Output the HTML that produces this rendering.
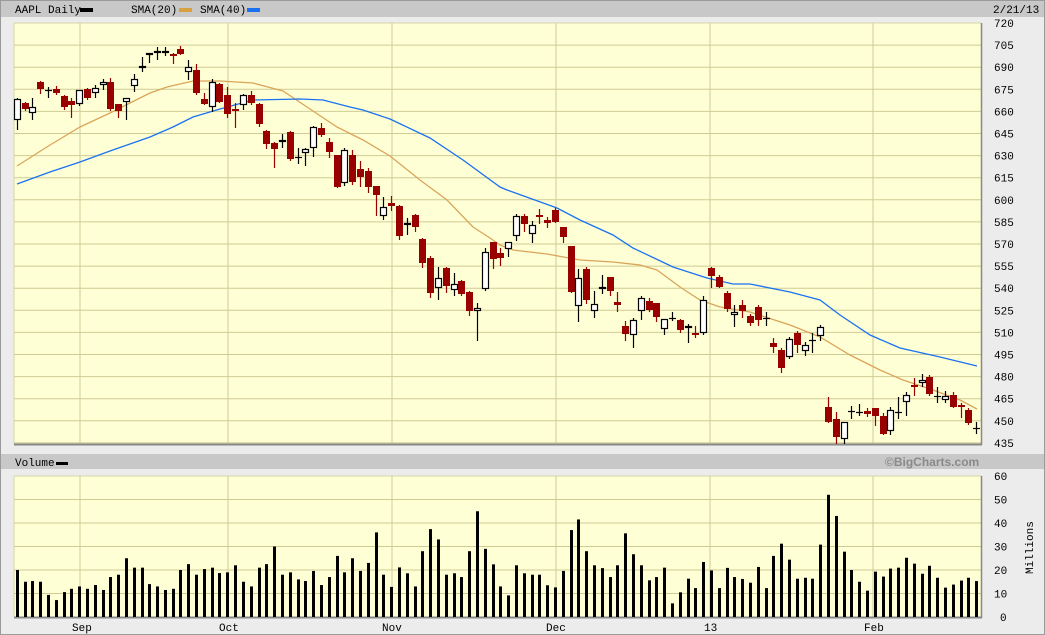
<!DOCTYPE html>
<html><head><meta charset="utf-8"><style>
html,body{margin:0;padding:0;background:#ececec;}
body{width:1045px;height:635px;overflow:hidden;position:relative;font-family:"Liberation Mono","DejaVu Sans Mono",monospace;}
svg{position:absolute;left:0;top:0;}
</style></head><body>
<svg id="s" width="1045" height="635" xmlns="http://www.w3.org/2000/svg" font-family="Liberation Mono, DejaVu Sans Mono, monospace" font-size="11"></svg>
<script>
var s=document.getElementById('s');var h='';
function r(x,y,w,hh,f){h+='<rect x="'+x+'" y="'+y+'" width="'+w+'" height="'+hh+'" fill="'+f+'"/>';}
function l(x1,y1,x2,y2,c,w){h+='<line x1="'+x1+'" y1="'+y1+'" x2="'+x2+'" y2="'+y2+'" stroke="'+c+'" stroke-width="'+(w||1)+'"/>';}
function t(x,y,str,extra){h+='<text x="'+x+'" y="'+y+'" '+(extra||'')+'>'+str+'</text>';}
// frame
r(0,0,1045,635,'#ececec');
l(0.5,0,0.5,635,'#9a9a9a');l(0,0.5,1045,0.5,'#9a9a9a');l(1044.5,0,1044.5,635,'#9a9a9a');l(0,634.5,1045,634.5,'#9a9a9a');
r(1,1,1043,16,'#c8c8c8');
r(1,454,1043,15,'#c8c8c8');
// header text
t(15,13,'AAPL Daily');r(80,8,13,4,'#000');
t(131,13,'SMA(20)');r(179,8,13,4,'#d9a040');
t(200,13,'SMA(40)');r(247,8,13,4,'#1a72f0');
t(993,13,'2/21/13');
t(15,466,'Volume');r(56,462,12,3,'#000');
t(885,466,'©BigCharts.com','font-family="Liberation Sans, sans-serif" font-weight="bold" font-size="12" fill="#8a8a8a"');
// plot areas
r(14,23,967,421,'#ffffd6');
r(14,476,967,141,'#ffffd6');
var grid='#cfcb94';
for(var k=0;k<=19;k++){var y=23+k*22.1;if(y<443)l(14,y,981,y,grid);}
for(var k=0;k<=6;k++){var y=617-k*23.5;l(14,y,981,y,grid);}
[80,228,392,556,710,873].forEach(function(x){l(x,23,x,444,grid);l(x,476,x,617,grid);});
l(14,23,981,23,'#d6d3a8');l(14,476,981,476,'#d6d3a8');l(14,23,14,444,'#d6d3a8');l(14,476,14,617,'#d6d3a8');
// borders shadow
l(14,444.5,982,444.5,'#888',2);l(981.5,23,981.5,445,'#888',1.5);
l(14,617.5,982,617.5,'#888',2);l(981.5,476,981.5,618,'#888',1.5);
// price labels
for(var k=0;k<=19;k++){var p=720-15*k;t(994,27+k*22.1,p);}
[60,50,40,30,20,10,0].forEach(function(v,i){t(v==0?1000:994,480+i*23.5,v);});
t(0,0,'Millions','transform="translate(1033,574) rotate(-90)"');
// months
[['Sep',72],['Oct',219],['Nov',382],['Dec',546],['13',704],['Feb',864]].forEach(function(m){t(m[1],631,m[0]);});
// SMA lines
var s20=[[17,166],[50,145],[80,127],[110,113],[150,93],[167,87],[193,81],[220,81],[253,83],[283,91],[307,107],[337,127],[363,140],[390,156],[420,180],[447,200],[473,227],[490,238],[500,245],[513,250],[547,254],[580,260],[613,262],[640,265],[657,270],[680,287],[700,300],[720,307],[750,312],[790,325],[820,337],[850,355],[880,370],[903,380],[933,390],[960,400],[977,409]];
var s40=[[17,184],[50,172],[80,162],[110,151],[150,137],[173,127],[193,117],[220,109],[253,100],[300,99],[323,100],[350,107],[363,110],[390,119],[430,138],[463,160],[500,187],[507,190],[557,208],[580,220],[613,235],[633,248],[673,267],[707,278],[733,284],[750,284],[790,292],[820,300],[840,315],[870,335],[900,348],[940,357],[977,366]];
h+='<polyline fill="none" stroke="#d9a55a" stroke-width="1.3" points="'+s20.join(' ')+'"/>';
h+='<polyline fill="none" stroke="#1a72f0" stroke-width="1.3" points="'+s40.join(' ')+'"/>';
// candles: [o,c,hi,lo,type] type:1 hollow,0 red,2 cross
var C=[[99,120,98,129,1],[103,109,102,110,0],[107,113,98,119,1],[82,89,81,93,0],[90,90,87,97,2],[89,93,86,94,0],[96,107,95,109,0],[101,105,98,117,0],[90,104,90,105,1],[89,98,88,99,0],[88,93,85,97,1],[82,85,79,89,1],[82,109,78,110,0],[104,111,104,117,0],[98,102,98,119,1],[79,86,74,91,1],[66,68,57,71,1],[53,54,53,62,1],[51,53,47,59,1],[51,53,47,55,1],[54,55,53,63,0],[49,54,46,54,0],[67,72,60,79,1],[70,93,64,94,0],[99,104,93,104,0],[82,107,79,111,1],[84,102,83,102,0],[95,114,87,117,0],[109,110,103,127,0],[95,105,94,109,1],[95,103,91,104,0],[104,124,103,126,0],[131,144,130,148,0],[143,149,142,167,0],[140,142,134,147,1],[132,159,131,160,0],[157,157,148,163,2],[149,153,148,165,1],[127,148,126,156,1],[128,135,123,136,0],[142,152,138,157,0],[155,187,155,187,0],[150,183,148,185,1],[155,182,150,184,0],[169,177,161,186,0],[171,187,168,192,0],[186,195,186,215,0],[207,216,197,219,1],[203,206,196,210,0],[206,236,205,239,0],[223,225,218,234,1],[215,227,214,231,0],[239,263,238,267,0],[258,293,256,297,0],[278,288,267,299,1],[268,286,267,292,0],[284,290,273,295,1],[281,294,280,295,0],[292,311,291,315,0],[308,311,303,340,1],[252,289,248,290,1],[242,259,242,268,0],[253,258,248,265,0],[242,249,242,256,1],[216,236,214,240,1],[216,224,214,231,0],[225,234,221,242,1],[215,217,209,223,0],[220,223,217,227,0],[210,222,208,222,0],[227,237,227,242,0],[246,292,246,292,0],[278,306,269,321,1],[269,300,267,303,0],[304,311,291,317,1],[287,289,275,293,1],[277,291,277,295,0],[302,305,292,311,0],[326,334,321,340,0],[320,335,318,347,1],[298,311,296,319,1],[301,310,298,311,0],[303,317,303,321,0],[319,329,319,334,1],[318,318,312,320,2],[320,330,319,332,0],[326,328,324,342,1],[333,335,326,337,0],[300,333,296,334,1],[268,276,267,287,0],[277,287,275,287,0],[293,309,291,311,0],[312,315,305,326,1],[305,311,300,317,0],[316,323,314,325,0],[307,320,305,325,0],[318,318,312,325,2],[343,347,338,352,0],[350,368,348,372,0],[339,357,337,358,1],[333,345,331,352,0],[345,351,342,355,1],[340,340,333,352,2],[327,336,325,340,1],[407,422,397,422,0],[419,437,412,443,0],[422,439,422,443,1],[411,411,406,418,2],[412,412,404,415,2],[411,414,408,416,0],[408,416,408,425,0],[416,434,413,434,0],[410,431,407,434,1],[412,412,397,418,2],[395,402,392,415,1],[385,387,378,395,0],[380,383,374,386,1],[377,394,375,395,0],[396,396,387,402,2],[396,400,391,402,1],[395,407,392,407,0],[405,407,403,417,0],[410,423,408,424,0],[428,428,422,433,2]];
C.forEach(function(c,i){
 var x=Math.round(16.7+7.8*i);
 var col=c[4]==0?'#990000':'#000';
 l(x+0.5,c[2],x+0.5,c[3]+1,col,1.2);
 if(c[4]==2){l(x-3,c[0]+0.5,x+4,c[0]+0.5,'#000',1.2);}
 else if(c[4]==0){r(x-3,c[0],7,Math.max(2,c[1]-c[0]),'#990000');}
 else{h+='<rect x="'+(x-2.5)+'" y="'+(c[0]+0.5)+'" width="6" height="'+Math.max(1,c[1]-c[0]-1)+'" fill="#fff" stroke="#000" stroke-width="1.2"/>';}
});
// volume
var V=[20,15,15.3,15,9.4,7.2,10.6,12,13,12,13.6,11.5,17,18,25,21,21,14,13,11.5,12,20,22.5,18,20.4,21,18.7,19,22,15,13,21,22.5,30,18,19,16,15.3,19.6,13.6,17,26,19,25,19.6,23,36,18,12.8,
21.1,18.6,13,28,37.4,33,18,18.6,17,28,45,29,22.4,13,9.2,22,18.6,18,18,13.5,12.6,19.6,37,41.5,28,22,20.8,17,22,35.6,26.7,22,15.6,17,21,5.8,10.5,16.3,12.3,23.4,19.8,12.3,
20.9,17,16.2,14.6,21.3,12.3,26,31.2,24.4,16.3,16.7,16.3,30.8,52,43,27.8,20,15,11.2,19.3,17.2,20.6,21,25.2,22.7,18.4,21.8,16.7,12.5,13.8,15.5,16.7,15.3];
V.forEach(function(v,i){var x=Math.round(16.7+7.8*i);var hh=v*2.35;r(x-1,617-hh,3,hh,'#000');});
s.innerHTML=h;
</script>
</body></html>
